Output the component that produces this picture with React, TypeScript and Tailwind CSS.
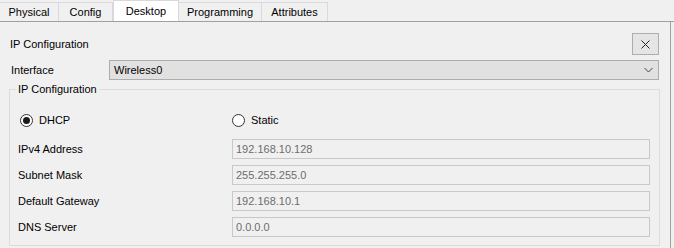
import React from "react";

const tabs = ["Physical", "Config", "Desktop", "Programming", "Attributes"];
const tabWidths = ["w-[59px]", "w-[54px]", "w-[66px]", "w-[83px]", "w-[66px]"];

const fields = [
  { label: "IPv4 Address", value: "192.168.10.128" },
  { label: "Subnet Mask", value: "255.255.255.0" },
  { label: "Default Gateway", value: "192.168.10.1" },
  { label: "DNS Server", value: "0.0.0.0" },
];

const Radio = ({ checked, label }: { checked?: boolean; label: string }) => (
  <div className="flex items-center gap-[6px]">
    <span className="w-[13px] h-[13px] rounded-full border border-[#333333] bg-white flex items-center justify-center">
      {checked && <span className="w-[7px] h-[7px] rounded-full bg-[#1a1a1a]" />}
    </span>
    <span>{label}</span>
  </div>
);

export default function App() {
  return (
    <div
      className="w-[674px] h-[248px] overflow-hidden bg-[#f0f0f0] text-[11px] text-black"
      style={{ fontFamily: '"Liberation Sans", Arial, sans-serif' }}
    >
      {/* Tabs */}
      <div className="flex h-[22px] border-b border-[#a0a0a0]">
        {tabs.map((t, i) =>
          t === "Desktop" ? (
            <div
              key={t}
              className={`${tabWidths[i]} h-[21px] bg-white flex items-center justify-center border-x border-t border-[#d9d9d9]`}
            >
              {t}
            </div>
          ) : (
            <div
              key={t}
              className={`${tabWidths[i]} h-[19px] mt-[2px] flex items-center justify-center border-r border-t border-[#d9d9d9]`}
            >
              {t}
            </div>
          )
        )}
      </div>

      {/* Panel */}
      <div className="w-[671px] h-[226px] border-r border-[#a0a0a0] flex flex-col">
        <div className="mt-[11px] h-[22px] flex items-center justify-between pl-[10px] pr-[11px]">
          <span>IP Configuration</span>
          <button className="w-[27px] h-[22px] border border-[#adadad] bg-[#e5e5e5] flex items-center justify-center">
            <svg width="9" height="9" viewBox="0 0 9 9">
              <path d="M0.5 0.5 L8.5 8.5 M8.5 0.5 L0.5 8.5" stroke="#222" strokeWidth="1" />
            </svg>
          </button>
        </div>

        <div className="mt-[5px] h-[20px] flex items-center pl-[11px] pr-[11px]">
          <span className="w-[98px]">Interface</span>
          <div className="flex-1 h-[20px] border border-[#adadad] bg-[#e1e1e1] flex items-center justify-between pl-[4px] pr-[5px]">
            <span>Wireless0</span>
            <svg width="9" height="6" viewBox="0 0 9 6">
              <path d="M0.5 1 L4.5 5 L8.5 1" stroke="#444" strokeWidth="1" fill="none" />
            </svg>
          </div>
        </div>

        <fieldset className="mt-[2px] ml-[9px] mr-[10px] border border-[#dcdcdc] pb-[8px]">
          <legend className="ml-[6px] px-[2px] leading-[14px]">IP Configuration</legend>
          <div className="mt-[16px] h-[14px] grid grid-cols-[222px_1fr] items-center">
            <div className="pl-[10px]">
              <Radio checked label="DHCP" />
            </div>
            <Radio label="Static" />
          </div>
          <div className="mt-[13px] flex flex-col gap-[6px]">
            {fields.map((f) => (
              <div key={f.label} className="grid grid-cols-[222px_1fr] items-center pr-[9px]">
                <span className="pl-[8px]">{f.label}</span>
                <div className="h-[20px] border border-[#c8c8c8] bg-[#f0f0f0] flex items-center pl-[3px] text-[#6d6d6d]">
                  {f.value}
                </div>
              </div>
            ))}
          </div>
        </fieldset>
      </div>
    </div>
  );
}
